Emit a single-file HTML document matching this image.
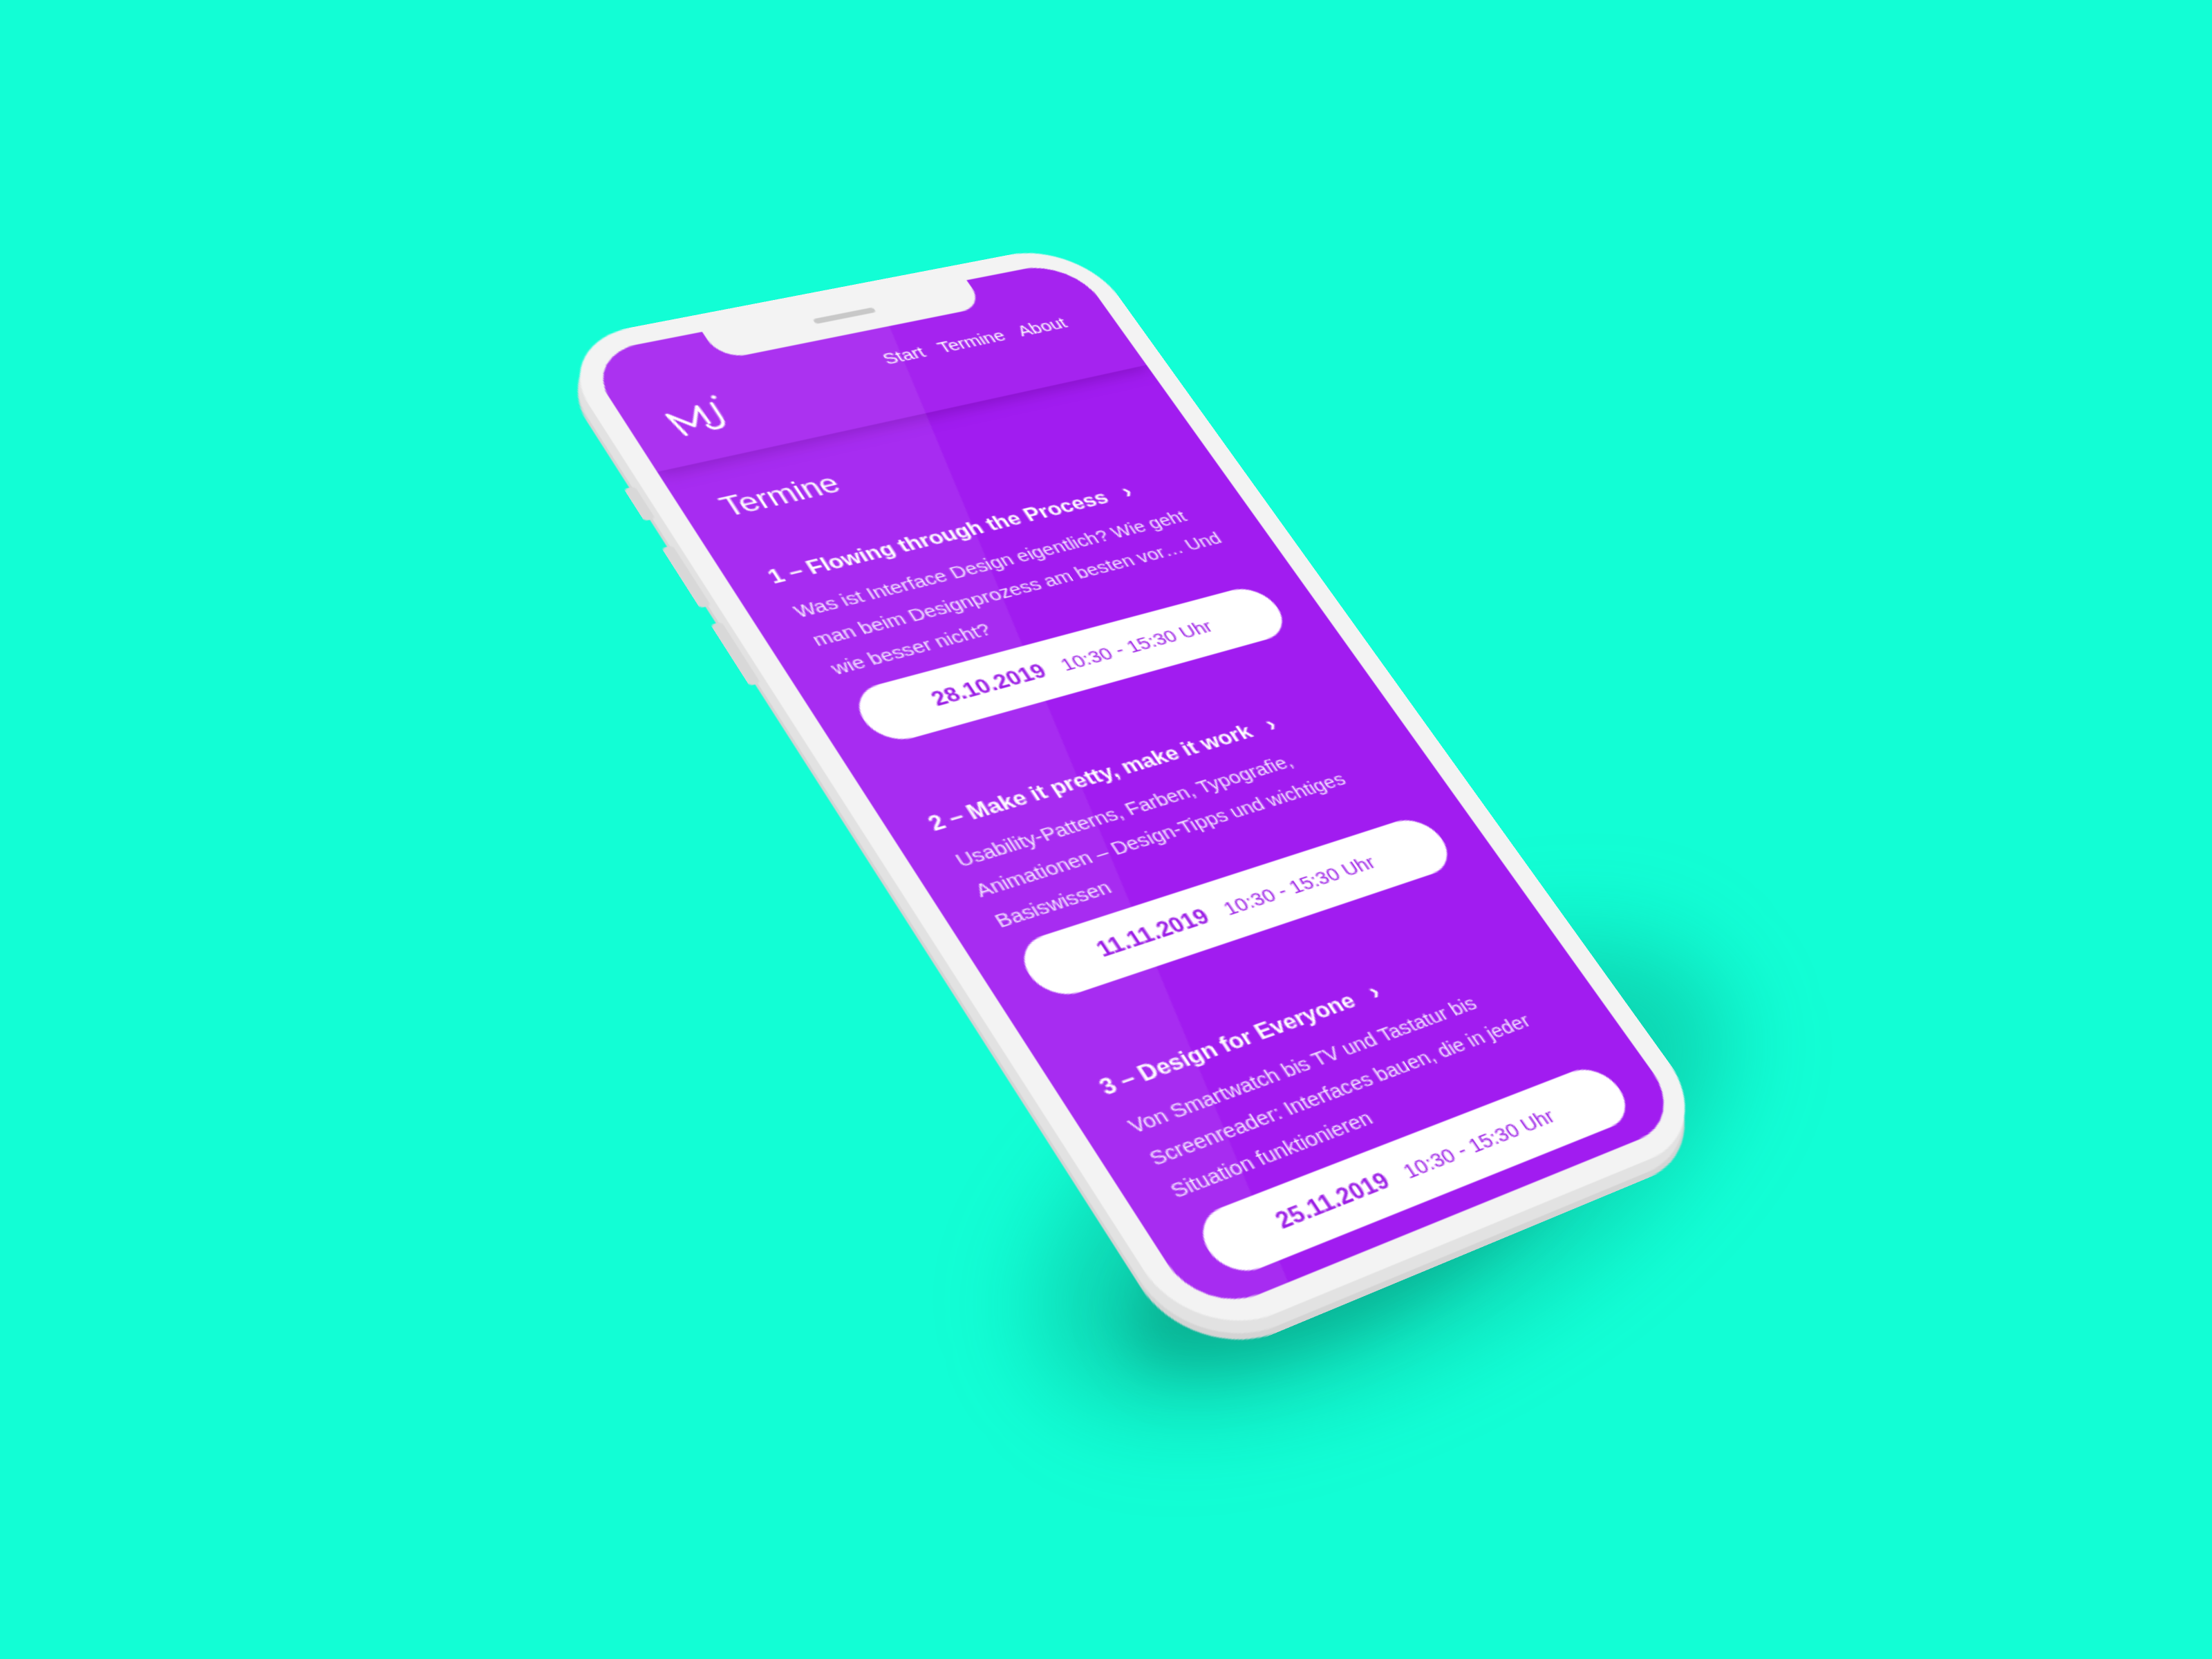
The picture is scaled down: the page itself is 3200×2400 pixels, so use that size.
<!DOCTYPE html>
<html><head><meta charset="utf-8">
<style>
*{margin:0;padding:0;box-sizing:border-box}
body{width:3200px;height:2400px;background:#12FED5;overflow:hidden;position:relative;font-family:"Liberation Sans",sans-serif}
.sh{position:absolute;border-radius:50%}
#phone{position:absolute;left:0;top:0;width:0;height:0;transform-origin:0 0;
transform:matrix3d(2.1864,-0.26453,0,0.00023947, 0.84200,1.41022,0,-0.00013058, 0,0,1,0, 881.7,506.2,0,1)}
.abs{position:absolute}
.t{position:absolute;white-space:nowrap;color:#fff}
.title{font-size:17px;font-weight:bold;line-height:17px}
.desc{font-size:15.3px;line-height:15.3px;color:#f4e6ff}
.pill{position:absolute;left:29px;width:328px;height:48px;border-radius:24px;background:#fff;color:#9b1de6;white-space:nowrap;line-height:48px;padding-left:52px;font-size:15.5px}
.pill b{font-size:17px;margin-right:14px}
.chev{font-weight:bold;font-size:18px}
</style></head><body>
<div class="sh" style="left:1450px;top:1450px;width:1100px;height:500px;background:rgba(0,120,95,0.3);filter:blur(70px);transform:rotate(-28deg)"></div>
<div class="sh" style="left:1600px;top:1650px;width:700px;height:260px;background:rgba(0,100,80,0.3);filter:blur(40px);transform:rotate(-28deg)"></div>

<div id="phone">
  <div class="abs" style="left:-44px;top:-4px;width:420px;height:867px;border-radius:62px;background:#d4d4d4"></div>
  <div class="abs" style="left:-42px;top:-8px;width:420px;height:867px;border-radius:62px;background:#e2e2e2"></div>
  <div class="abs" style="left:-48px;top:120px;width:8px;height:30px;border-radius:3px;background:#d8d8d8"></div>
  <div class="abs" style="left:-48px;top:175px;width:8px;height:55px;border-radius:3px;background:#d8d8d8"></div>
  <div class="abs" style="left:-48px;top:245px;width:8px;height:55px;border-radius:3px;background:#d8d8d8"></div>
  <div class="abs" style="left:-36px;top:-16px;width:420px;height:867px;border-radius:60px;background:#f3f3f3"></div>
  <div class="abs" style="left:-20px;top:0;width:388px;height:835px;border-radius:42px;background:#A11CF0;overflow:hidden">
    <div class="abs" style="left:0;top:0;width:388px;height:112px;background:#A523EF;box-shadow:0 4px 12px rgba(90,0,130,0.35)"></div>
    <div class="abs" style="left:0;top:0;width:388px;height:930px;background:rgba(255,255,255,0.07);clip-path:polygon(0 0,226px 0,45px 930px,0 930px)"></div>
    <div class="abs" style="left:89px;top:-2px;width:210px;height:30px;border-radius:0 0 20px 20px;background:#f3f3f3"></div>
    <div class="abs" style="left:170px;top:8px;width:48px;height:5px;border-radius:3px;background:#c8c8c8"></div>
    <svg class="abs" style="left:26px;top:54px" width="48" height="38" viewBox="0 0 48 38">
      <path d="M8 32 L4 12 L17 26 L27 10 L28 26" fill="none" stroke="#fff" stroke-width="2.6" stroke-linecap="round" stroke-linejoin="round"/>
      <path d="M38 10 L38 24 Q38 32 31 32 Q27 32 26 28" fill="none" stroke="#fff" stroke-width="2.6" stroke-linecap="round"/>
      <circle cx="42" cy="5" r="1.8" fill="#fff"/>
    </svg>
    <div class="t" style="right:38px;top:50px;font-size:15px;line-height:15px">Start&nbsp;&nbsp;&nbsp;Termine&nbsp;&nbsp;&nbsp;About</div>

    <div class="t" style="left:27px;top:143px;font-size:24px;line-height:24px">Termine</div>

    <div class="t title" style="left:28px;top:211px">1 – Flowing through the Process &nbsp;&nbsp;<span class="chev">›</span></div>
    <div class="t desc" style="left:30px;top:245px">Was ist Interface Design eigentlich? Wie geht</div>
    <div class="t desc" style="left:30px;top:271px">man beim Designprozess am besten vor… Und</div>
    <div class="t desc" style="left:30px;top:297px">wie besser nicht?</div>
    <div class="pill" style="top:325px"><b>28.10.2019</b>10:30 - 15:30 Uhr</div>

    <div class="t title" style="left:28px;top:433px">2 – Make it pretty, make it work &nbsp;&nbsp;<span class="chev">›</span></div>
    <div class="t desc" style="left:30px;top:467px">Usability-Patterns, Farben, Typografie,</div>
    <div class="t desc" style="left:30px;top:493px">Animationen – Design-Tipps und wichtiges</div>
    <div class="t desc" style="left:30px;top:519px">Basiswissen</div>
    <div class="pill" style="top:546px"><b>11.11.2019</b>10:30 - 15:30 Uhr</div>

    <div class="t title" style="left:28px;top:656px">3 – Design for Everyone &nbsp;&nbsp;<span class="chev">›</span></div>
    <div class="t desc" style="left:30px;top:690px">Von Smartwatch bis TV und Tastatur bis</div>
    <div class="t desc" style="left:30px;top:716px">Screenreader: Interfaces bauen, die in jeder</div>
    <div class="t desc" style="left:30px;top:742px">Situation funktionieren</div>
    <div class="pill" style="top:771px"><b>25.11.2019</b>10:30 - 15:30 Uhr</div>
  </div>
</div>
</body></html>
